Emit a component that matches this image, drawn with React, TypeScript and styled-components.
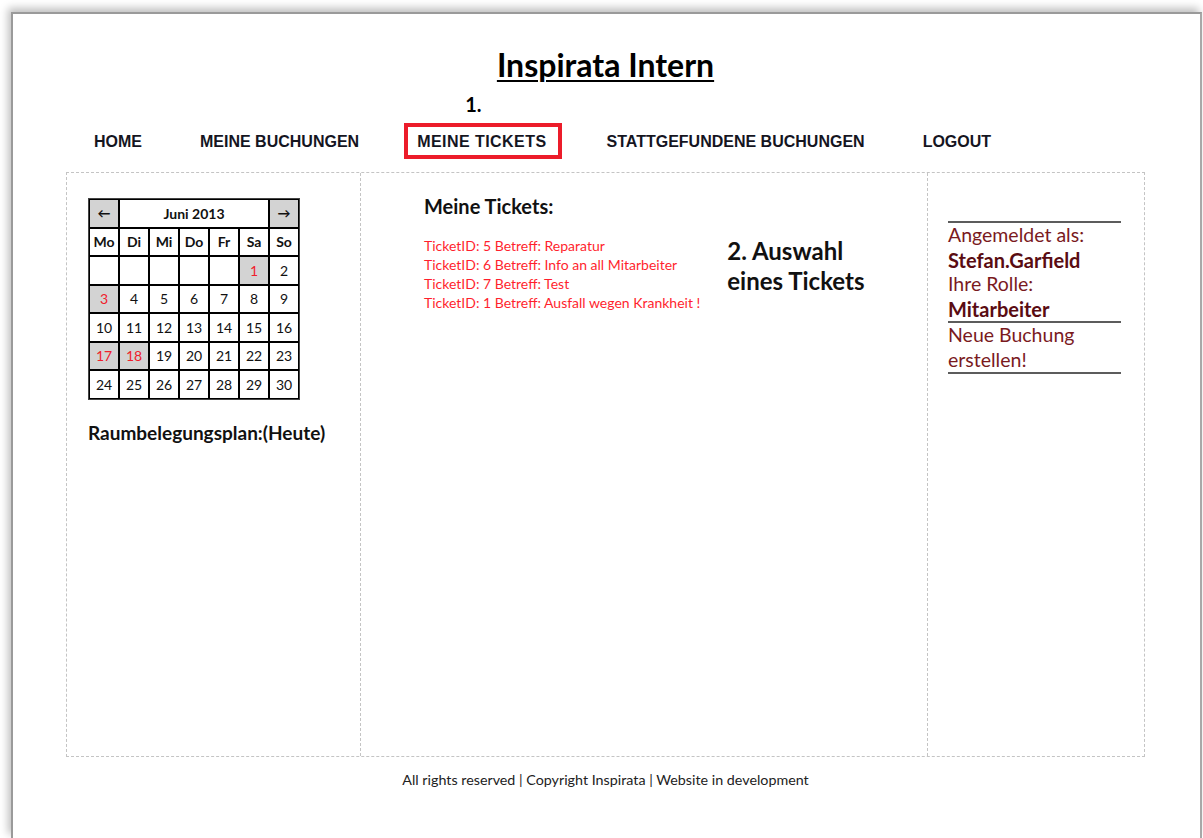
import React from "react";
import styled, { createGlobalStyle } from "styled-components";

const GlobalStyle = createGlobalStyle`
  html, body {
    margin: 0;
    padding: 0;
    background: #ffffff;
  }
  body {
    font-family: Lato, "Open Sans", sans-serif;
    color: #000;
  }
`;

const sans = `Lato, "Open Sans", sans-serif`;

// the page sheet with its soft shadow on top and left
const Sheet = styled.div`
  margin: 12px 0 0 11px;
  width: 1191px;
  min-height: 826px;
  background: #fff;
  border-top: 2px solid #9a9a9a;
  border-left: 2px solid #9a9a9a;
  border-right: 2px solid #a8a8a8;
  box-shadow: -3px -4px 8px rgba(0, 0, 0, 0.25);
  box-sizing: border-box;
`;

const Wrapper = styled.div`
  width: 1079px;
  margin: 0 0 0 53px;
`;

const Title = styled.h1`
  margin: 0;
  padding-top: 32px;
  text-align: center;
  font-family: ${sans};
  font-weight: 700;
  font-size: 32px;
  line-height: 38px;
  text-decoration: underline;
  text-decoration-thickness: 2px;
  text-underline-offset: 3px;
`;

const Nav = styled.ul`
  list-style: none;
  margin: 39px 0 0;
  padding: 0 0 0 15px;
  display: flex;
  gap: 32px;
`;

const NavItem = styled.li<{ $active?: boolean }>`
  position: relative;
  padding: 5px ${(p) => (p.$active ? "11px" : "9px")} 4px 9px;
  border: 4px solid ${(p) => (p.$active ? "#ec1c2a" : "transparent")};
  font-family: "Liberation Sans", Arial, sans-serif;
  font-weight: 700;
  font-size: 16px;
  line-height: 19px;
  letter-spacing: ${(p) => (p.$active ? "0.45px" : "0")};
  color: #15151f;
`;

// numbered step marker sitting above a nav entry
const StepMark = styled.span`
  position: absolute;
  left: 57px;
  top: -35px;
  font-family: ${sans};
  font-weight: 700;
  font-size: 20px;
  line-height: 24px;
  letter-spacing: 0;
  color: #000;
`;

const Content = styled.div`
  margin-top: 13px;
  height: 585px;
  display: grid;
  grid-template-columns: 293px 567px 1fr;
  border: 1px dashed #c4c4c4;
  box-sizing: border-box;
`;

const Column = styled.div<{ $divider?: boolean }>`
  border-left: ${(p) => (p.$divider ? "1px dashed #c4c4c4" : "none")};
  box-sizing: border-box;
`;

const LeftCol = styled(Column)`
  padding: 25px 0 0 21px;
`;

const Calendar = styled.table`
  border-collapse: separate;
  border-spacing: 0;
  border: 1px solid #444;
  font-family: ${sans};
  font-size: 14px;
`;

const Cell = styled.td<{ $marked?: boolean; $head?: boolean }>`
  width: 30px;
  height: 28.5px;
  box-sizing: border-box;
  padding: 0;
  border: 1px solid #000;
  text-align: center;
  vertical-align: middle;
  background: ${(p) => (p.$marked ? "#d3d3d3" : "#fff")};
  color: ${(p) => (p.$marked ? "#f0202c" : "#111")};
  font-weight: ${(p) => (p.$head ? 700 : 400)};
`;

const NavCell = styled(Cell)`
  background: #d3d3d3;
  font-weight: 700;
  font-size: 13px;
`;

const MonthCell = styled(Cell)`
  font-weight: 700;
  font-size: 14px;
`;

const PlanLabel = styled.div`
  margin-top: 21px;
  font-family: ${sans};
  font-weight: 700;
  font-size: 19px;
  line-height: 23px;
  color: #111;
`;

const MiddleCol = styled(Column)`
  padding: 21px 0 0 63px;
`;

const SectionTitle = styled.h2`
  margin: 0;
  font-family: ${sans};
  font-weight: 700;
  font-size: 20px;
  line-height: 24px;
  color: #111;
`;

const TicketRow = styled.div`
  display: flex;
  gap: 27px;
  margin-top: 18px;
`;

const TicketList = styled.ul`
  list-style: none;
  margin: 0;
  padding: 0;
`;

const Ticket = styled.li`
  font-family: ${sans};
  font-size: 14px;
  line-height: 19px;
  color: #ff1f2e;
`;

const Hint = styled.div`
  font-family: ${sans};
  font-weight: 700;
  font-size: 24px;
  line-height: 30px;
  color: #111;
`;

const RightCol = styled(Column)`
  padding: 48px 23px 0 20px;
`;

const Rule = styled.div`
  height: 2px;
  background: #5c5c5c;
`;

const Info = styled.div<{ $bold?: boolean }>`
  font-family: ${sans};
  font-size: ${(p) => (p.$bold ? "20px" : "19.5px")};
  line-height: 24.5px;
  font-weight: ${(p) => (p.$bold ? 700 : 400)};
  color: ${(p) => (p.$bold ? "#5a0c12" : "#7a1a1e")};
`;

const Footer = styled.div`
  margin-top: 14px;
  text-align: center;
  font-family: ${sans};
  font-size: 14.3px;
  color: #222;
`;

const navLinks = [
  "HOME",
  "MEINE BUCHUNGEN",
  "MEINE TICKETS",
  "STATTGEFUNDENE BUCHUNGEN",
  "LOGOUT",
];

const weekDays = ["Mo", "Di", "Mi", "Do", "Fr", "Sa", "So"];

// June 2013 starts on a Saturday
const weeks: (number | null)[][] = [
  [null, null, null, null, null, 1, 2],
  [3, 4, 5, 6, 7, 8, 9],
  [10, 11, 12, 13, 14, 15, 16],
  [17, 18, 19, 20, 21, 22, 23],
  [24, 25, 26, 27, 28, 29, 30],
];

const bookedDays = [1, 3, 17, 18];

const tickets = [
  "TicketID: 5 Betreff: Reparatur",
  "TicketID: 6 Betreff: Info an all Mitarbeiter",
  "TicketID: 7 Betreff: Test",
  "TicketID: 1 Betreff: Ausfall wegen Krankheit !",
];

export default function App() {
  return (
    <>
      <GlobalStyle />
      <Sheet>
        <Wrapper>
          <Title>Inspirata Intern</Title>
          <Nav>
            {navLinks.map((link) => (
              <NavItem key={link} $active={link === "MEINE TICKETS"}>
                {link === "MEINE TICKETS" && <StepMark>1.</StepMark>}
                {link}
              </NavItem>
            ))}
          </Nav>

          <Content>
            <LeftCol>
              <Calendar>
                <tbody>
                  <tr>
                    <NavCell>←</NavCell>
                    <MonthCell colSpan={5}>Juni 2013</MonthCell>
                    <NavCell>→</NavCell>
                  </tr>
                  <tr>
                    {weekDays.map((d) => (
                      <Cell key={d} $head>
                        {d}
                      </Cell>
                    ))}
                  </tr>
                  {weeks.map((week, i) => (
                    <tr key={i}>
                      {week.map((day, j) => (
                        <Cell
                          key={j}
                          $marked={day !== null && bookedDays.includes(day)}
                        >
                          {day ?? ""}
                        </Cell>
                      ))}
                    </tr>
                  ))}
                </tbody>
              </Calendar>
              <PlanLabel>Raumbelegungsplan:(Heute)</PlanLabel>
            </LeftCol>

            <MiddleCol $divider>
              <SectionTitle>Meine Tickets:</SectionTitle>
              <TicketRow>
                <TicketList>
                  {tickets.map((t) => (
                    <Ticket key={t}>{t}</Ticket>
                  ))}
                </TicketList>
                <Hint>
                  2. Auswahl
                  <br />
                  eines Tickets
                </Hint>
              </TicketRow>
            </MiddleCol>

            <RightCol $divider>
              <Rule />
              <Info>Angemeldet als:</Info>
              <Info $bold>Stefan.Garfield</Info>
              <Info>Ihre Rolle:</Info>
              <Info $bold>Mitarbeiter</Info>
              <Rule />
              <Info>Neue Buchung erstellen!</Info>
              <Rule />
            </RightCol>
          </Content>

          <Footer>
            All rights reserved | Copyright Inspirata | Website in development
          </Footer>
        </Wrapper>
      </Sheet>
    </>
  );
}
